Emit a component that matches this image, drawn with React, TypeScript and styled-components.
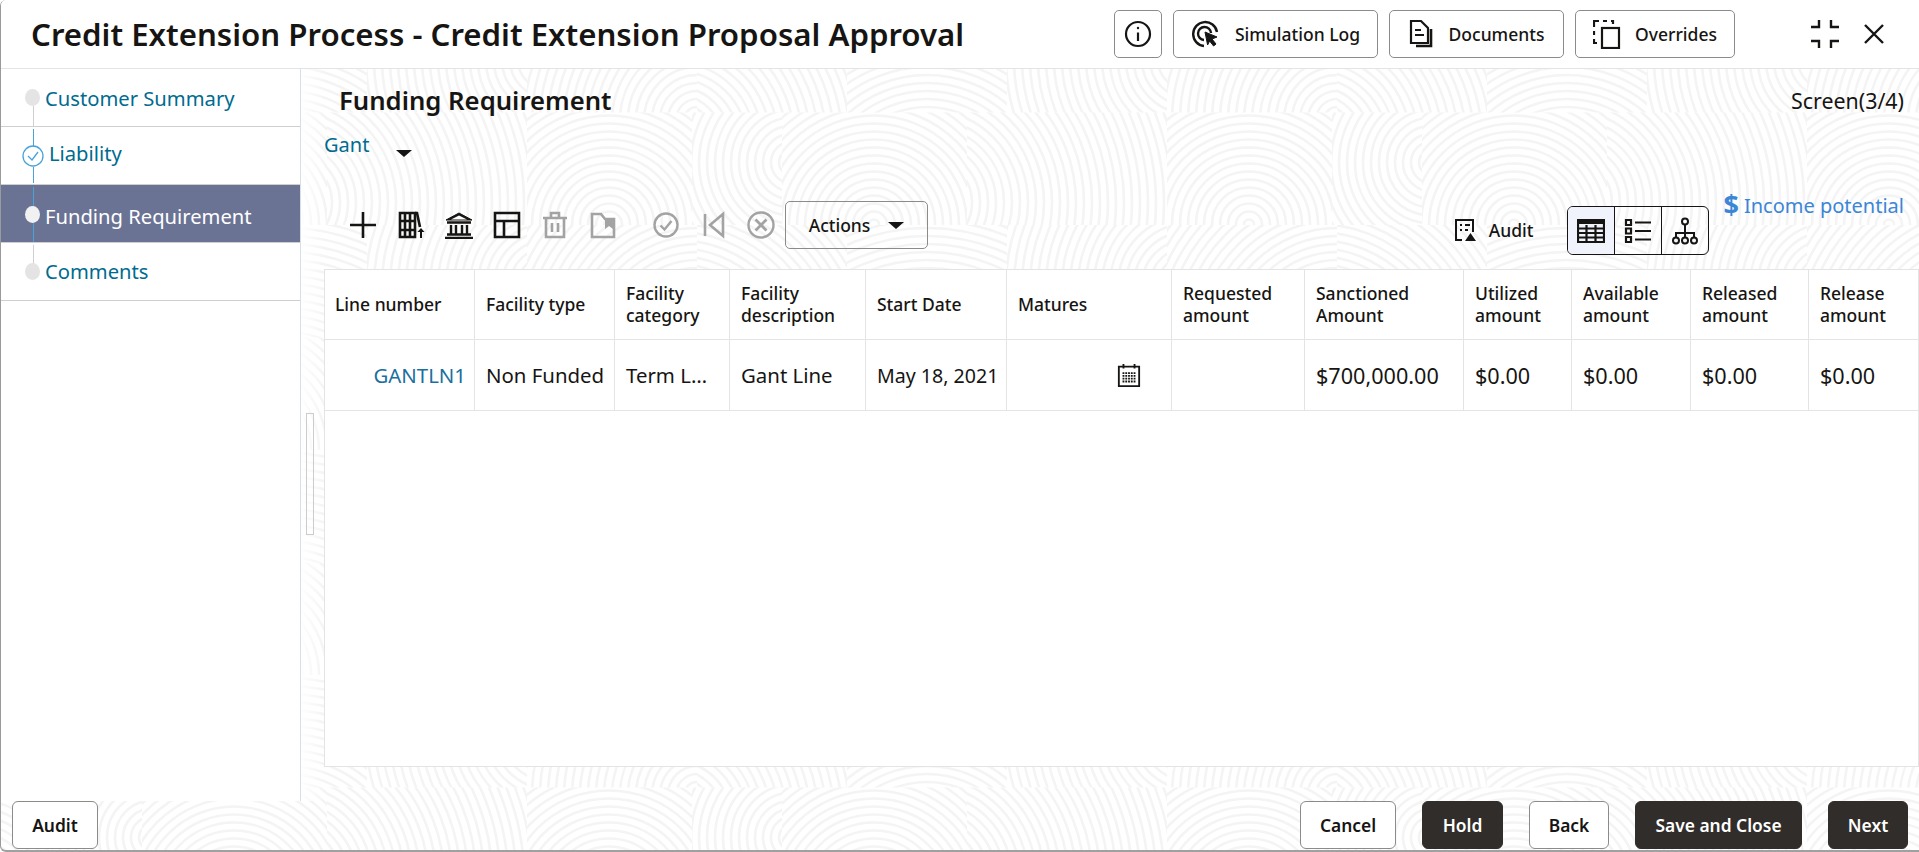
import * as React from "react";
import styled, { createGlobalStyle } from "styled-components";

// faint fingerprint wallpaper, one tile cut into cells of concentric rings
const rings = (x: number, y: number, w: number, cx: number, cy: number) => {
  let out = "";
  for (let r = 5; r < 290; r += 8) {
    out += `<circle cx='${cx}' cy='${cy}' r='${r}'/>`;
  }
  return `<svg x='${x}' y='${y}' width='${w}' height='112.5' fill='none' stroke='#f4f4f4' stroke-width='2.6'>${out}</svg>`;
};
const tile = `<svg xmlns='http://www.w3.org/2000/svg' width='640' height='225'>${[
  rings(0, 0, 170, 170, 120),
  rings(170, 0, 150, -20, 140),
  rings(320, 0, 160, 80, 200),
  rings(480, 0, 160, 180, 60),
  rings(0, 112.5, 165, 82, 112),
  rings(165, 112.5, 90, 100, 50),
  rings(255, 112.5, 185, 92, 112),
  rings(440, 112.5, 200, -40, 90),
].join("")}</svg>`;
const wallpaper = `url("data:image/svg+xml,${encodeURIComponent(tile)}")`;

const GlobalStyle = createGlobalStyle`
  html, body {
    margin: 0;
    padding: 0;
    height: 100%;
    background: #ffffff;
  }
  body {
    font-family: "Noto Sans", "Open Sans", sans-serif;
    color: #161513;
    overflow: hidden;
  }
  #root {
    height: 100%;
  }
`;

const Page = styled.div`
  display: flex;
  flex-direction: column;
  box-sizing: border-box;
  width: 1919px;
  height: 852px;
  border-left: 1px solid #9a9a9a;
  border-bottom: 2px solid #a0a0a0;
  border-radius: 6px 0 0 6px;
  background-color: #ffffff;
  background-image: ${wallpaper};
  background-position: 526px 0;
  overflow: hidden;
`;

const Header = styled.header`
  display: flex;
  align-items: flex-start;
  flex: 0 0 69px;
  box-sizing: border-box;
  padding: 10px 35px 0 30px;
  background: #ffffff;
  border-bottom: 1px solid #e4e4e4;
`;

const Title = styled.h1`
  margin: 0;
  font-size: 31.2px;
  line-height: 48px;
  font-weight: 600;
  white-space: nowrap;
`;

const HeaderActions = styled.div`
  display: flex;
  gap: 11px;
  margin-left: auto;
`;

const OutlineButton = styled.button<{ $w: number }>`
  display: flex;
  align-items: center;
  justify-content: center;
  gap: 14px;
  box-sizing: border-box;
  width: ${(p) => p.$w}px;
  height: 48px;
  padding: 0;
  border: 1px solid #8d8b88;
  border-radius: 5px;
  background: #ffffff;
  color: #161513;
  font-family: inherit;
  font-size: 17.5px;
  font-weight: 500;
`;

const WindowControls = styled.div`
  display: flex;
  align-items: center;
  gap: 24px;
  height: 48px;
  margin-left: 75px;
`;

const Main = styled.main`
  display: flex;
  flex: 1;
  min-height: 0;
`;

const Sidebar = styled.nav`
  flex: 0 0 299px;
  background: #ffffff;
  border-right: 1px solid #d5e0ea;
`;

const Step = styled.div<{ $active?: boolean }>`
  position: relative;
  display: flex;
  align-items: center;
  box-sizing: border-box;
  height: 58px;
  padding-left: 44px;
  border-bottom: 1px solid #cfcfcf;
  background: ${(p) => (p.$active ? "#6b7394" : "transparent")};
  color: ${(p) => (p.$active ? "#ffffff" : "#006b8f")};
  font-size: 20.2px;
`;

const StepLabel = styled.span<{ $y?: number; $x?: number }>`
  transform: translate(${(p) => p.$x ?? 0}px, ${(p) => p.$y ?? 0}px);
`;

const Dot = styled.span<{ $top: number; $active?: boolean }>`
  position: absolute;
  left: 24px;
  top: ${(p) => p.$top}px;
  width: 15px;
  height: 17px;
  border-radius: 50%;
  background: ${(p) => (p.$active ? "#f1f1f1" : "#e4e4e4")};
`;

const Rail = styled.span<{ $top: number; $h: number; $blue?: boolean }>`
  position: absolute;
  left: 32px;
  top: ${(p) => p.$top}px;
  width: 1px;
  height: ${(p) => p.$h}px;
  background: ${(p) => (p.$blue ? "#4aa3d8" : "#cfcfcf")};
`;

const CheckMark = styled.svg`
  position: absolute;
  left: 21px;
  top: 18px;
  width: 22px;
  height: 22px;
`;

const Content = styled.section`
  position: relative;
  display: flex;
  flex: 1;
  flex-direction: column;
  min-width: 0;
  padding: 0 0 34px 23px;
  background: linear-gradient(to right, rgba(255, 255, 255, 0.9), rgba(255, 255, 255, 0) 24px);
`;

const Splitter = styled.div`
  position: absolute;
  left: 5px;
  top: 344px;
  box-sizing: border-box;
  width: 8px;
  height: 122px;
  border: 1px solid #cccccc;
`;

const TitleRow = styled.div`
  display: flex;
  align-items: center;
  justify-content: space-between;
  height: 32px;
  margin-top: 15px;
  padding: 0 15px;
`;

const SectionTitle = styled.h2`
  margin: 0;
  font-size: 25.7px;
  font-weight: 600;
`;

const ScreenCount = styled.span`
  font-size: 21.4px;
`;

const LineSelect = styled.div`
  display: flex;
  align-items: flex-start;
  gap: 27px;
  height: 30px;
  margin-top: 15px;
  color: #006b8f;
  font-size: 20px;
  line-height: 27px;
`;

const Caret = styled.span<{ $w: number }>`
  flex: none;
  width: 0;
  height: 0;
  border-left: ${(p) => p.$w}px solid transparent;
  border-right: ${(p) => p.$w}px solid transparent;
  border-top: ${(p) => Math.round(p.$w * 0.9)}px solid #161513;
`;

const SelectCaret = styled(Caret)`
  margin-top: 19px;
`;

const Toolbar = styled.div`
  display: flex;
  align-items: flex-start;
  height: 62px;
  margin-top: 30px;
  margin-bottom: 16px;
  padding-left: 25px;
`;

const ToolIcons = styled.div`
  display: flex;
  align-items: center;
  height: 48px;
  margin-top: 10px;
`;

const ToolIcon = styled.svg<{ $w: number; $after: number }>`
  flex: none;
  width: ${(p) => p.$w}px;
  height: 28px;
  margin-right: ${(p) => p.$after}px;
`;

const ActionsButton = styled(OutlineButton)`
  gap: 18px;
  margin-top: 10px;
  margin-left: 9px;
  background: transparent;
`;

const AuditLink = styled.div`
  display: flex;
  align-items: center;
  gap: 12px;
  height: 47px;
  margin-top: 15px;
  margin-left: auto;
  font-size: 17.5px;
  font-weight: 500;
`;

const ViewSwitch = styled.div`
  display: flex;
  height: 47px;
  margin-top: 15px;
  margin-left: 33px;
  border: 1px solid #161513;
  border-radius: 6px;
  overflow: hidden;
`;

const ViewOption = styled.div<{ $on?: boolean }>`
  display: flex;
  align-items: center;
  justify-content: center;
  width: 46px;
  background: ${(p) => (p.$on ? "#f0f3fb" : "transparent")};
  border-left: ${(p) => (p.$on ? "none" : "1px solid #161513")};
`;

const IncomeLink = styled.div`
  display: flex;
  align-items: center;
  gap: 5px;
  height: 28px;
  margin-left: 15px;
  margin-right: 15px;
  color: #3b86d6;
  font-size: 20px;
  white-space: nowrap;
`;

const Dollar = styled.span`
  font-size: 27px;
  font-weight: 700;
  line-height: 28px;
`;

const Table = styled.div`
  flex: 1;
  box-sizing: border-box;
  border: 1px solid #e4e4e4;
  background: #ffffff;
`;

const columns = "149px 140px 115px 136px 141px 165px 133px 159px 108px 119px 118px 111px";

const Row = styled.div<{ $h: number }>`
  display: grid;
  grid-template-columns: ${columns};
  height: ${(p) => p.$h}px;
  box-sizing: border-box;
  border-bottom: 1px solid #e4e4e4;
`;

const HeadCell = styled.div`
  display: flex;
  align-items: center;
  box-sizing: border-box;
  padding: 0 6px 2px 11px;
  border-left: 1px solid #e4e4e4;
  font-size: 17.5px;
  font-weight: 500;
  line-height: 22px;

  &:first-child {
    border-left: none;
    padding-left: 10px;
  }
`;

const Cell = styled.div<{ $link?: boolean; $end?: boolean; $size?: number }>`
  display: flex;
  align-items: center;
  justify-content: ${(p) => (p.$end ? "flex-end" : "flex-start")};
  box-sizing: border-box;
  padding: 0 8px 0 11px;
  border-left: 1px solid #e4e4e4;
  color: ${(p) => (p.$link ? "#1a6f9e" : "#161513")};
  font-size: ${(p) => p.$size ?? 20.4}px;
  white-space: nowrap;

  &:first-child {
    border-left: none;
  }
`;

const DateIcon = styled.svg`
  width: 24px;
  height: 24px;
  margin-right: 22px;
`;

const Footer = styled.footer`
  display: flex;
  flex: 0 0 49px;
  justify-content: space-between;
  padding: 0 11px;
`;

const FooterGroup = styled.div`
  display: flex;
  gap: 26px;
`;

const FooterButton = styled.button<{ $w: number; $dark?: boolean }>`
  box-sizing: border-box;
  width: ${(p) => p.$w}px;
  height: 48px;
  padding: 0;
  border: 1px solid ${(p) => (p.$dark ? "#312d2a" : "#8d8b88")};
  border-radius: 6px;
  background: ${(p) => (p.$dark ? "#312d2a" : "#ffffff")};
  color: ${(p) => (p.$dark ? "#ffffff" : "#161513")};
  font-family: inherit;
  font-size: 17.4px;
  font-weight: 600;
`;

const Mute = "#a3a3a3";
const Ink = "#161513";

const headers = [
  "Line number",
  "Facility type",
  "Facility category",
  "Facility description",
  "Start Date",
  "Matures",
  "Requested amount",
  "Sanctioned Amount",
  "Utilized amount",
  "Available amount",
  "Released amount",
  "Release amount",
];

const App: React.FC = () => {
  return (
    <>
      <GlobalStyle />
      <Page>
        <Header>
          <Title>Credit Extension Process - Credit Extension Proposal Approval</Title>
          <HeaderActions>
            <OutlineButton $w={48} aria-label="Info">
              <svg width="28" height="28" viewBox="0 0 28 28" fill="none" stroke={Ink} strokeWidth="2.2">
                <circle cx="14" cy="14" r="12" />
                <path d="M14 12.5V21" />
                <circle cx="14" cy="8" r="1.2" fill={Ink} stroke="none" />
              </svg>
            </OutlineButton>
            <OutlineButton $w={205}>
              <svg width="30" height="30" viewBox="0 0 30 30" fill="none" stroke={Ink} strokeWidth="2.4">
                <path d="M13 27A12 12 0 1 1 26 13" />
                <path d="M13 21a6.5 6.5 0 1 1 7-7" />
                <path d="M14 13l12 5-5 2 4 5-2.4 2-4-5-2 4z" fill={Ink} strokeWidth="1" />
              </svg>
              Simulation Log
            </OutlineButton>
            <OutlineButton $w={175}>
              <svg width="26" height="30" viewBox="0 0 26 30" fill="none" stroke={Ink} strokeWidth="2.2">
                <path d="M2 2h10l7 7v15H2z" />
                <path d="M6 11h6M6 16h9" />
                <path d="M22 10v17H7" strokeWidth="2.6" />
              </svg>
              Documents
            </OutlineButton>
            <OutlineButton $w={160}>
              <svg width="28" height="30" viewBox="0 0 28 30" fill="none" stroke={Ink} strokeWidth="2.2">
                <path d="M1 8V2h5M10 2h4M18 2h2v3M1 12v4M1 20v4h3" />
                <rect x="9" y="9" width="17" height="20" />
              </svg>
              Overrides
            </OutlineButton>
          </HeaderActions>
          <WindowControls>
            <svg width="30" height="30" viewBox="0 0 30 30" fill="none" stroke={Ink} strokeWidth="2.4" aria-label="Restore">
              <path d="M9 1v7H1M21 1v7h8M9 29v-7H1M21 29v-7h8" />
            </svg>
            <svg width="20" height="20" viewBox="0 0 20 20" fill="none" stroke={Ink} strokeWidth="2.4" aria-label="Close">
              <path d="M1 1l18 18M19 1L1 19" />
            </svg>
          </WindowControls>
        </Header>
        <Main>
          <Sidebar>
            <Step>
              <Dot $top={20} />
              <Rail $top={37} $h={20} />
              <StepLabel>Customer Summary</StepLabel>
            </Step>
            <Step>
              <Rail $top={2} $h={18} $blue />
              <CheckMark viewBox="0 0 22 22" fill="none" stroke="#4aa3d8" strokeWidth="1.3">
                <circle cx="11" cy="11" r="10" />
                <path d="M6 11l4 4 6-8" />
              </CheckMark>
              <Rail $top={40} $h={16} $blue />
              <StepLabel $x={4} $y={-3}>
                Liability
              </StepLabel>
            </Step>
            <Step $active>
              <Rail $top={2} $h={55} $blue />
              <Dot $top={21} $active />
              <StepLabel $y={2}>Funding Requirement</StepLabel>
            </Step>
            <Step>
              <Rail $top={2} $h={20} />
              <Dot $top={20} />
              <StepLabel $y={-1}>Comments</StepLabel>
            </Step>
          </Sidebar>
          <Content>
            <Splitter />
            <TitleRow>
              <SectionTitle>Funding Requirement</SectionTitle>
              <ScreenCount>Screen(3/4)</ScreenCount>
            </TitleRow>
            <LineSelect>
              Gant
              <SelectCaret $w={8} />
            </LineSelect>
            <Toolbar>
              <ToolIcons>
                <ToolIcon $w={28} $after={21} viewBox="0 0 28 28" fill="none" stroke={Ink} strokeWidth="2.6">
                  <path d="M14 1v26M1 14h26" />
                </ToolIcon>
                <ToolIcon $w={28} $after={18} viewBox="0 0 28 28" fill="none" stroke={Ink} strokeWidth="2.6">
                  <path d="M2 2h15v24H2zM7 2v24M12 2v24M2 10h15M2 19h15" />
                  <path d="M17 2h2l3 14" />
                  <path d="M23 27v-7" strokeWidth="2" />
                  <path d="M19.5 21l3.5-4 3.5 4z" fill={Ink} stroke="none" />
                </ToolIcon>
                <ToolIcon $w={30} $after={19} viewBox="0 0 30 28" fill="none" stroke={Ink} strokeWidth="2.4">
                  <path d="M15 2L2 9h26z" fill={Ink} strokeWidth="1" />
                  <path d="M15 4.5L7 8.5h16z" fill="#ffffff" stroke="none" />
                  <path d="M3 11.5h24M7 14v9M12 14v9M18 14v9M23 14v9M3 23.5h24M1 27h28" />
                </ToolIcon>
                <ToolIcon $w={28} $after={21} viewBox="0 0 28 28" fill="none" stroke={Ink} strokeWidth="2.6">
                  <path d="M2 2h24v24H2zM2 10h24M11 10v16" />
                </ToolIcon>
                <ToolIcon $w={26} $after={22} viewBox="0 0 26 28" fill="none" stroke={Mute} strokeWidth="2.6">
                  <path d="M1 7h24M9 7V2h8v5M4 7v19h18V7M10 12v9M16 12v9" />
                </ToolIcon>
                <ToolIcon $w={26} $after={37} viewBox="0 0 26 28" fill="none" stroke={Mute} strokeWidth="2.6">
                  <path d="M2 26V3h9l4 5h9v18z" />
                  <path d="M15 8h8v10l-4-3-4 3z" fill={Mute} stroke="none" />
                </ToolIcon>
                <ToolIcon $w={26} $after={24} viewBox="0 0 26 28" fill="none" stroke={Mute} strokeWidth="2.4">
                  <circle cx="13" cy="14" r="11.5" />
                  <path d="M7.5 14.5l4 4 7-8.5" />
                </ToolIcon>
                <ToolIcon $w={22} $after={21} viewBox="0 0 22 28" fill="none" stroke={Mute} strokeWidth="2.6">
                  <path d="M2 3v22M20 3L7 14l13 11z" />
                </ToolIcon>
                <ToolIcon $w={30} $after={0} viewBox="0 0 30 28" fill="none" stroke={Mute} strokeWidth="2.4">
                  <circle cx="15" cy="14" r="12.5" />
                  <path d="M9.5 8.5l11 11M20.5 8.5l-11 11" strokeWidth="2.8" />
                </ToolIcon>
              </ToolIcons>
              <ActionsButton $w={143}>
                Actions
                <Caret $w={8} />
              </ActionsButton>
              <AuditLink>
                <svg width="23" height="24" viewBox="0 0 23 24" fill="none" stroke={Ink} strokeWidth="2">
                  <path d="M8 22H2V2h17v12" />
                  <path d="M6 7h2M11 7h5M6 12h2M11 12h3" />
                  <path d="M11 23l5.5-8 5.5 8z" fill={Ink} stroke="none" />
                </svg>
                Audit
              </AuditLink>
              <ViewSwitch>
                <ViewOption $on>
                  <svg width="28" height="26" viewBox="0 0 28 26" fill="none" stroke={Ink} strokeWidth="2.2">
                    <path d="M1 2h26v22H1z" />
                    <path d="M1 4h26" strokeWidth="4" />
                    <path d="M1 10.5h26M1 15h26M1 19.5h26M9.5 7v17M18.5 7v17" />
                  </svg>
                </ViewOption>
                <ViewOption>
                  <svg width="28" height="26" viewBox="0 0 28 26" fill="none" stroke={Ink} strokeWidth="2.2">
                    <path d="M2 2h5v5H2zM2 10.5h5v5H2zM2 19h5v5H2z" />
                    <path d="M11 4.5h16M11 13h16M11 21.5h16" />
                  </svg>
                </ViewOption>
                <ViewOption>
                  <svg width="28" height="28" viewBox="0 0 28 28" fill="none" stroke={Ink} strokeWidth="2">
                    <circle cx="14" cy="4.5" r="3" />
                    <path d="M14 8v8M5 20v-4h18v4M14 16v4" />
                    <circle cx="5" cy="23.5" r="3" />
                    <circle cx="14" cy="23.5" r="3" />
                    <circle cx="23" cy="23.5" r="3" />
                  </svg>
                </ViewOption>
              </ViewSwitch>
              <IncomeLink>
                <Dollar>$</Dollar>
                Income potential
              </IncomeLink>
            </Toolbar>
            <Table>
              <Row $h={70}>
                {headers.map((h) => (
                  <HeadCell key={h}>{h}</HeadCell>
                ))}
              </Row>
              <Row $h={71}>
                <Cell $link $end>
                  GANTLN1
                </Cell>
                <Cell>Non Funded</Cell>
                <Cell>Term L…</Cell>
                <Cell>Gant Line</Cell>
                <Cell $size={19.6}>May 18, 2021</Cell>
                <Cell $end>
                  <DateIcon viewBox="0 0 26 26" fill="none" stroke={Ink} strokeWidth="2">
                    <path d="M2 4h22v21H2z" />
                    <path d="M7 1v5M19 1v5" />
                    <path d="M6 11h14M6 14h14M6 17h14M6 20h14" strokeWidth="2" strokeDasharray="2 1" />
                  </DateIcon>
                </Cell>
                <Cell />
                <Cell $size={21.6}>$700,000.00</Cell>
                <Cell $size={21.6}>$0.00</Cell>
                <Cell $size={21.6}>$0.00</Cell>
                <Cell $size={21.6}>$0.00</Cell>
                <Cell $size={21.6}>$0.00</Cell>
              </Row>
            </Table>
          </Content>
        </Main>
        <Footer>
          <FooterButton $w={86}>Audit</FooterButton>
          <FooterGroup>
            <FooterButton $w={96}>Cancel</FooterButton>
            <FooterButton $w={81} $dark>
              Hold
            </FooterButton>
            <FooterButton $w={80}>Back</FooterButton>
            <FooterButton $w={167} $dark>
              Save and Close
            </FooterButton>
            <FooterButton $w={80} $dark>
              Next
            </FooterButton>
          </FooterGroup>
        </Footer>
      </Page>
    </>
  );
};

export default App;
